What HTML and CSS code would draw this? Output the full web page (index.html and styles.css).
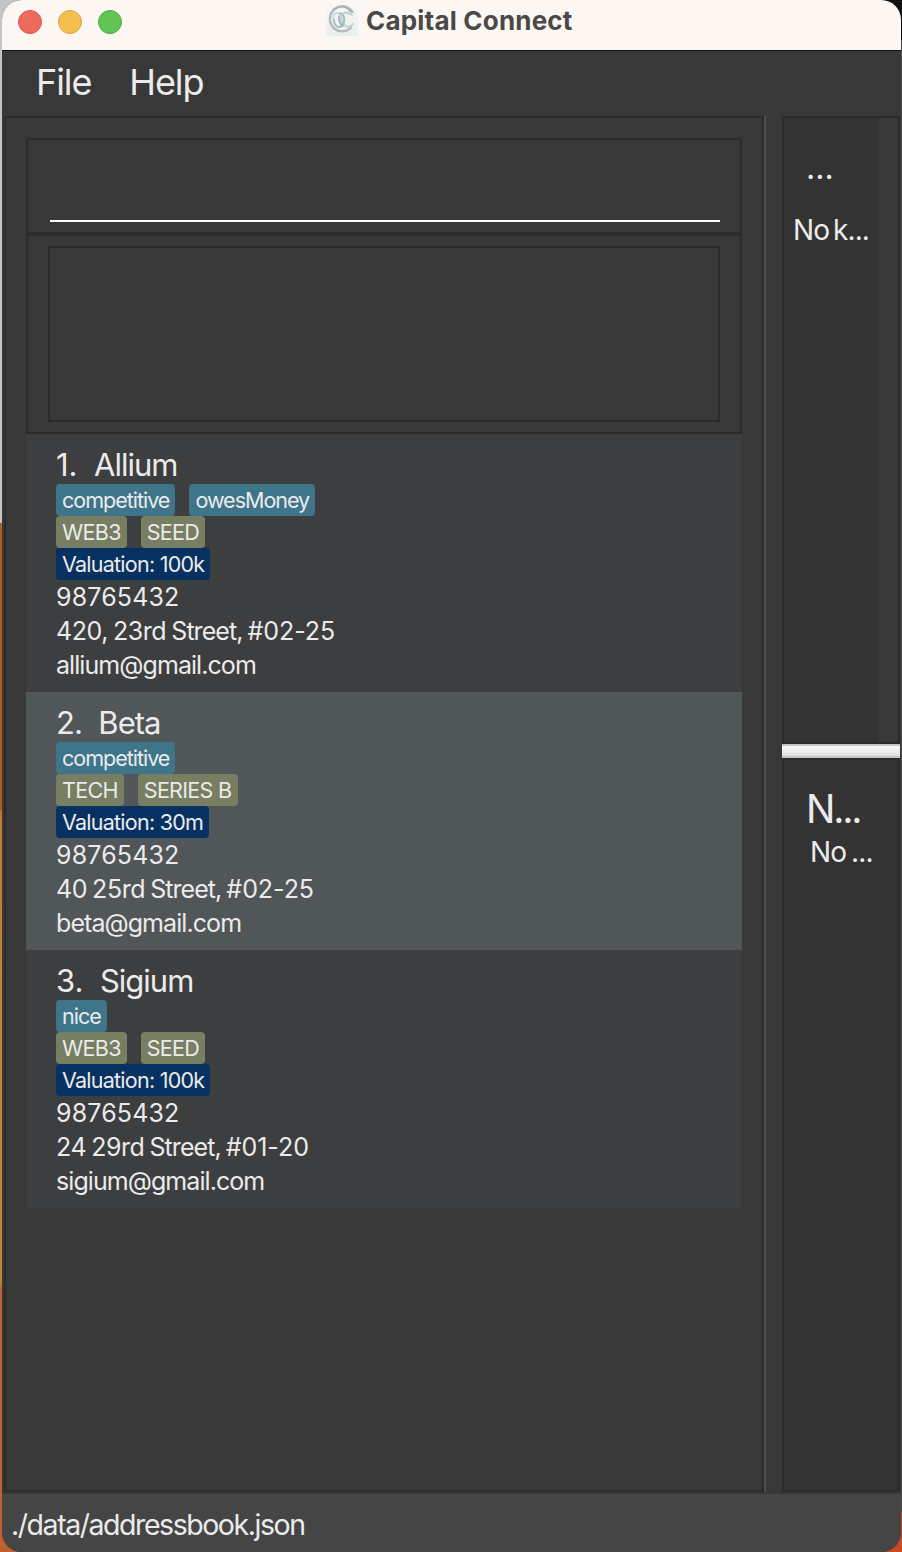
FILE: index.html
```html
<!DOCTYPE html>
<html lang="en">
<head>
<meta charset="utf-8">
<title>Capital Connect</title>
<link rel="stylesheet" href="styles.css">
</head>
<body>
<div class="window">
  <header class="titlebar">
    <div class="lights"><i class="light red"></i><i class="light amber"></i><i class="light green"></i></div>
    <div class="title">
      <svg class="logo" viewBox="0 0 32 32" width="32" height="32">
        <defs><linearGradient id="lg" x1="0" y1="0" x2="0" y2="1"><stop offset="0" stop-color="#f9f7f3"/><stop offset="1" stop-color="#e8f0ee"/></linearGradient></defs>
        <rect width="32" height="32" fill="url(#lg)"/>
        <g fill="none" stroke-linecap="round">
          <path d="M26 7.500A12.200 12.500 0 1 0 25 23.500" stroke="#b3bac0" stroke-width="2.400"/>
          <path d="M8 5Q16 0 22 5Q24 8 27 8" stroke="#a9afb5" stroke-width="1.500"/>
          <path d="M26 11Q18 6 15.500 12T20 22Q24 24 27 20" stroke="#b9d3d4" stroke-width="2"/>
          <path d="M8 17Q6 9 11 9T17 16T20 22" stroke="#c3dedc" stroke-width="2"/>
          <path d="M14 9Q20 12 18 18Q16 24 12 23Q8 21 8 16" stroke="#aeb6be" stroke-width="1.800"/>
          <path d="M13 12Q12 19 17 22" stroke="#a5adb8" stroke-width="1.600"/>
        </g>
      </svg>
      <span>Capital Connect</span>
    </div>
  </header>
  <nav class="menu"><span>File</span><span>Help</span></nav>
  <main class="body">
    <section class="left">
      <div class="command"><div class="input"></div></div>
      <div class="result"><div class="output"></div></div>
      <article class="card">
        <h2><span class="num wide">1.</span><span>Allium</span></h2>
        <div class="tags teal"><span>competitive</span><span>owesMoney</span></div>
        <div class="tags olive"><span>WEB3</span><span>SEED</span></div>
        <div class="tags navy"><span>Valuation: 100k</span></div>
        <p class="phone">98765432</p><p class="address">420, 23rd <span class="street">Street,</span> <span class="unit">#02-25</span></p><p class="email">allium@gmail.com</p>
      </article>
      <article class="card alt">
        <h2><span class="num">2.</span><span>Beta</span></h2>
        <div class="tags teal"><span>competitive</span></div>
        <div class="tags olive"><span>TECH</span><span>SERIES B</span></div>
        <div class="tags navy"><span>Valuation: 30m</span></div>
        <p class="phone">98765432</p><p class="address">40 25rd <span class="street">Street,</span> <span class="unit">#02-25</span></p><p class="email">beta@gmail.com</p>
      </article>
      <article class="card">
        <h2><span class="num wide">3.</span><span>Sigium</span></h2>
        <div class="tags teal"><span>nice</span></div>
        <div class="tags olive"><span>WEB3</span><span>SEED</span></div>
        <div class="tags navy"><span>Valuation: 100k</span></div>
        <p class="phone">98765432</p><p class="address">24 29rd <span class="street">Street,</span> <span class="unit">#01-20</span></p><p class="email">sigium@gmail.com</p>
      </article>
    </section>
    <div class="divider"></div>
    <aside class="right">
      <section class="upper"><div class="pane"><h3>...</h3><p>No k...</p></div></section>
      <div class="splitter"></div>
      <section class="lower"><h3>N...</h3><p>No ...</p></section>
    </aside>
  </main>
  <footer class="status">./data/addressbook.json</footer>
</div>
</body>
</html>
```
FILE: styles.css
```css
* { box-sizing: border-box; margin: 0; padding: 0; }
html, body { height: 1552px; overflow: hidden; }
body {
  padding: 0 1px 0 2px;
  font-family: Inter, "Liberation Sans", sans-serif;
  color: #ebebeb;
  background:
    linear-gradient(#111, #111) right top / 30px 40px no-repeat,
    linear-gradient(#c94b24, #c94b24) right bottom / 40px 40px no-repeat,
    linear-gradient(#4b4b4b, #4b4b4b) right top / 1px 100% no-repeat,
    linear-gradient(#c3c4c5 0 523px, #ad5f22 523px 811px, #c57a32 811px, #b88a32 1280px, #c0622d 1290px, #bf622f 1552px);
}
.window { height: 1552px; display: flex; flex-direction: column; background: #383838; border-radius: 20px; overflow: hidden; }
.titlebar { height: 51px; flex: none; display: grid; grid-template-columns: 324px 1fr; background: #fdf7f3; border-bottom: 1px solid #111; }
.lights { display: flex; gap: 16px; padding: 10px 0 0 16px; }
.light { width: 24px; height: 24px; border-radius: 50%; border: 1px solid; }
.red { background: #ec6a5e; border-color: #d6574e; }
.amber { background: #f4bf4f; border-color: #d9a33d; }
.green { background: #61c554; border-color: #50a944; }
.title { display: flex; padding-top: 4px; gap: 8px; font-size: 26px; font-weight: 700; line-height: 34px; letter-spacing: 0.2px; color: #4b4947; }
.logo { display: block; flex: none; }
.menu { height: 65px; flex: none; display: flex; gap: 38px; padding: 9px 0 0 34px; font-size: 36px; line-height: 44px; letter-spacing: -1.1px; }
.body { height: 1376px; flex: none; display: flex; padding-left: 2px; }
.left { width: 760px; border: 2px solid #2b2b2b; padding: 20px; }
.command { height: 96px; border: 2px solid #2b2b2b; padding: 0 20px 0 22px; }
.input { height: 82px; border-bottom: 2px solid #fff; }
.result { height: 200px; border: 2px solid #2b2b2b; padding: 10px 20px; }
.output { height: 176px; border: 2px solid #2b2b2b; }
.card { height: 258px; padding: 10px 30px; background: #3c3e3f; }
.card.alt { background: #515658; }
.card h2 { display: flex; gap: 16.5px; height: 40px; font-size: 31px; font-weight: 400; line-height: 42px; letter-spacing: -1px; }
.card .wide { letter-spacing: 0; }
.tags { height: 32px; display: flex; gap: 14px; }
.tags span { padding: 0 6px; border-radius: 4px; font-size: 21.5px; line-height: 32px; white-space: nowrap; }
.teal span { background: #3e758a; letter-spacing: -1px; }
.olive span { background: #777e61; letter-spacing: -0.68px; }
.navy span { background: #063160; letter-spacing: -0.75px; }
.card p { height: 34px; font-size: 25px; line-height: 34px; white-space: nowrap; }
.card .phone { letter-spacing: 0.15px; }
.card .address { letter-spacing: -0.45px; word-spacing: -1.5px; }
.card .street { letter-spacing: -0.95px; }
.card .unit { letter-spacing: -0.05px; }
.card .email { letter-spacing: -0.93px; }
.divider { width: 18px; border-left: 2px solid #4d4d4d; }
.right { width: 118px; display: flex; flex-direction: column; }
.upper { height: 628px; border: 2px solid #2b2b2b; background: #383838; }
.pane { width: 94px; height: 624px; background: #333; padding: 30px 0 0 9px; }
.pane h3 { padding-left: 13px; font-size: 32px; font-weight: 400; line-height: 40px; }
.pane p { margin-top: 24px; font-size: 28px; line-height: 36px; letter-spacing: -0.9px; word-spacing: -3px; white-space: nowrap; }
.splitter { height: 14px; border: solid #c4c4c4; border-width: 2px 0; background: linear-gradient(#fafafa, #dedede); }
.lower { flex: 1; border: 2px solid #2b2b2b; background: #333; padding: 24px 0 0 22px; white-space: nowrap; }
.lower h3 { font-size: 39px; font-weight: 400; line-height: 50px; letter-spacing: -2.2px; }
.lower p { padding-left: 4px; font-size: 28px; line-height: 36px; letter-spacing: -0.9px; word-spacing: -2px; }
.status { flex: 1; margin-top: 2px; padding: 12px 0 0 9px; background: #454545; font-size: 28.5px; line-height: 38px; letter-spacing: -1.45px; }
```
